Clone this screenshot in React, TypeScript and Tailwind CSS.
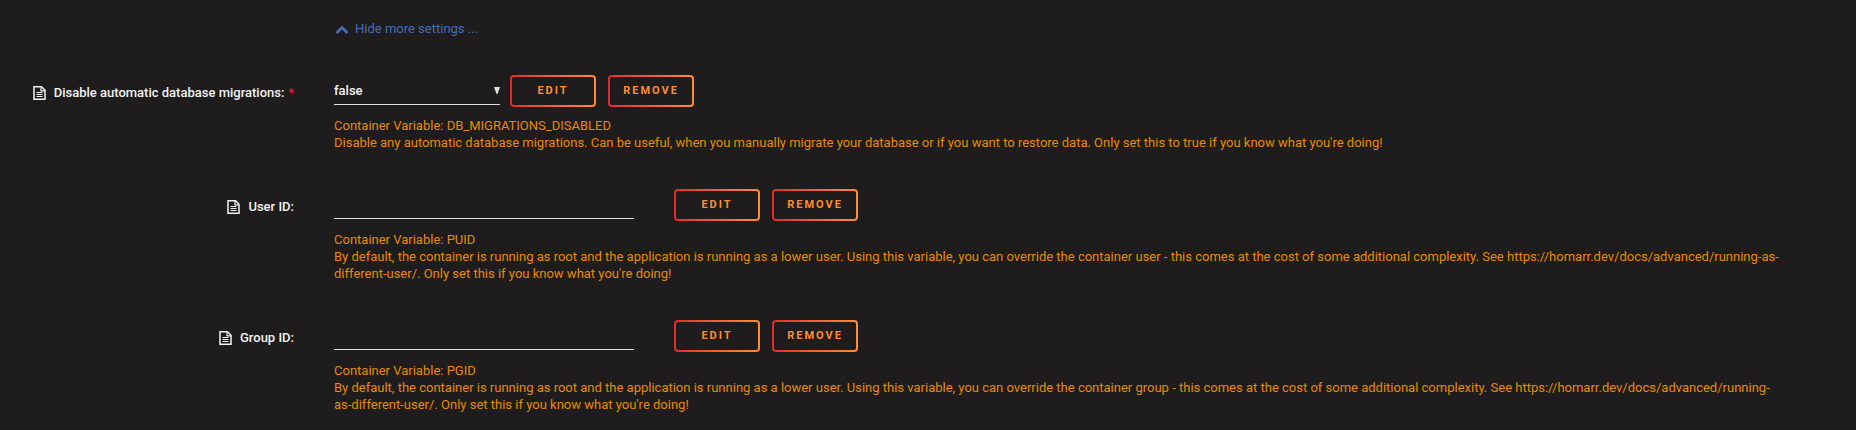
import React, { useState } from "react";

type Setting = {
  id: string;
  label: string;
  variable: string;
  description: string;
  options?: string[];
  required?: boolean;
};

const settings: Setting[] = [
  {
    id: "db-migrations-disabled",
    label: "Disable automatic database migrations:",
    variable: "DB_MIGRATIONS_DISABLED",
    description:
      "Disable any automatic database migrations. Can be useful, when you manually migrate your database or if you want to restore data. Only set this to true if you know what you're doing!",
    options: ["false", "true"],
    required: true,
  },
  {
    id: "puid",
    label: "User ID:",
    variable: "PUID",
    description:
      "By default, the container is running as root and the application is running as a lower user. Using this variable, you can override the container user - this comes at the cost of some additional complexity. See https://homarr.dev/docs/advanced/running-as-different-user/. Only set this if you know what you're doing!",
  },
  {
    id: "pgid",
    label: "Group ID:",
    variable: "PGID",
    description:
      "By default, the container is running as root and the application is running as a lower user. Using this variable, you can override the container group - this comes at the cost of some additional complexity. See https://homarr.dev/docs/advanced/running-as-different-user/. Only set this if you know what you're doing!",
  },
];

function FileIcon() {
  return (
    <svg className="h-[14px] w-[13px] shrink-0" viewBox="0 0 13 14" fill="none" stroke="currentColor" aria-hidden="true">
      <path strokeWidth="1.5" d="M1 .75h7.5l3.5 3.5v9H1z" />
      <path strokeWidth="1.2" d="M8 1v3.8h4" />
      <path d="M3.5 6.5h6M3.5 8.5h6M3.5 10.5h6" />
    </svg>
  );
}

function ChevronUpIcon() {
  return (
    <svg className="size-[14px]" viewBox="0 0 1792 1792" fill="currentColor" aria-hidden="true">
      <path d="M1683 1331l-166 165q-19 19-45 19t-45-19l-531-531-531 531q-19 19-45 19t-45-19l-166-165q-19-19-19-45.5t19-45.5l742-741q19-19 45-19t45 19l742 741q19 19 19 45.5t-19 45.5z" />
    </svg>
  );
}

function ActionButton({ children }: { children: React.ReactNode }) {
  return (
    <button
      type="button"
      className="h-8 w-[86px] rounded-sm bg-linear-to-r from-[#e22828] to-[#ff8c2f] p-0.5 text-[11px] font-bold tracking-[2px] text-[#ff8c2f] uppercase"
    >
      <span className="flex h-full items-center justify-center rounded-xs bg-[#1e1c1d]">{children}</span>
    </button>
  );
}

function SettingRow({ setting }: { setting: Setting }) {
  return (
    <div className="grid grid-cols-[294px_1fr] gap-x-10">
      <label
        htmlFor={setting.id}
        className="flex h-9 items-center justify-end text-[13px] font-medium text-[#f2f2f2]"
      >
        <FileIcon />
        <span className="ml-2">{setting.label}</span>
        {setting.required && <span className="ml-1 font-normal text-[#e22828]">*</span>}
      </label>

      <div>
        <div className="flex items-start gap-3">
          {setting.options ? (
            <div className="-mr-0.5 flex h-[30px] w-[166px] items-center border-b border-[#e0e0e0] pt-0.5">
              <select
                id={setting.id}
                className="w-full appearance-none bg-transparent text-[13px] font-medium text-[#f2f2f2] outline-none"
              >
                {setting.options.map((option) => (
                  <option key={option}>{option}</option>
                ))}
              </select>
              <svg className="h-[7px] w-[6px] shrink-0" viewBox="0 0 6 7" fill="#e0e0e0" aria-hidden="true">
                <path d="M0 0h6L3.5 7h-1z" />
              </svg>
            </div>
          ) : (
            <input
              id={setting.id}
              type="text"
              className="mr-7 h-[30px] w-[300px] border-b border-[#e0e0e0] bg-transparent text-[13px] text-[#f2f2f2] outline-none"
            />
          )}
          <ActionButton>Edit</ActionButton>
          <ActionButton>Remove</ActionButton>
        </div>

        {/* Help text */}
        <p className="mt-[10px] text-[13px] leading-[17px] text-[#e68a00]">
          Container Variable: {setting.variable}
          <br />
          {setting.description}
        </p>
      </div>
    </div>
  );
}

export default function App() {
  const [open, setOpen] = useState(true);

  return (
    <main className="min-h-screen bg-[#1e1c1d] pt-5 pr-[72px] pb-4 font-['Roboto',sans-serif]">
      <a
        href="#more-settings"
        onClick={(e) => {
          e.preventDefault();
          setOpen(!open);
        }}
        className="ml-[335px] flex w-fit items-center gap-1.5 text-[13px] leading-[17px] text-[#486dba]"
      >
        <ChevronUpIcon />
        {open ? "Hide" : "Show"} more settings ...
      </a>

      {open && (
        <div id="more-settings" className="mt-[38px] flex flex-col gap-[38px]">
          {settings.map((setting) => (
            <SettingRow key={setting.id} setting={setting} />
          ))}
        </div>
      )}
    </main>
  );
}
